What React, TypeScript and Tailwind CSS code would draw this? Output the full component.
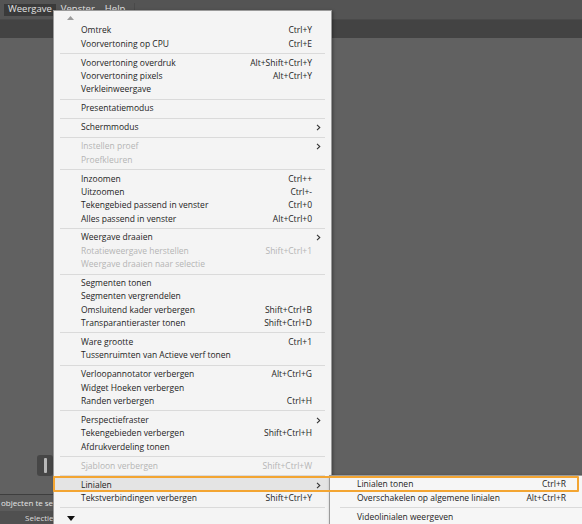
import React from "react";

type Item =
  | { type: "sep" }
  | { type: "item"; label: string; shortcut?: string; sub?: boolean; disabled?: boolean; active?: boolean };

const items: Item[] = [
  { type: "item", label: "Omtrek", shortcut: "Ctrl+Y" },
  { type: "item", label: "Voorvertoning op CPU", shortcut: "Ctrl+E" },
  { type: "sep" },
  { type: "item", label: "Voorvertoning overdruk", shortcut: "Alt+Shift+Ctrl+Y" },
  { type: "item", label: "Voorvertoning pixels", shortcut: "Alt+Ctrl+Y" },
  { type: "item", label: "Verkleinweergave" },
  { type: "sep" },
  { type: "item", label: "Presentatiemodus" },
  { type: "sep" },
  { type: "item", label: "Schermmodus", sub: true },
  { type: "sep" },
  { type: "item", label: "Instellen proef", sub: true, disabled: true },
  { type: "item", label: "Proefkleuren", disabled: true },
  { type: "sep" },
  { type: "item", label: "Inzoomen", shortcut: "Ctrl++" },
  { type: "item", label: "Uitzoomen", shortcut: "Ctrl+-" },
  { type: "item", label: "Tekengebied passend in venster", shortcut: "Ctrl+0" },
  { type: "item", label: "Alles passend in venster", shortcut: "Alt+Ctrl+0" },
  { type: "sep" },
  { type: "item", label: "Weergave draaien", sub: true },
  { type: "item", label: "Rotatieweergave herstellen", shortcut: "Shift+Ctrl+1", disabled: true },
  { type: "item", label: "Weergave draaien naar selectie", disabled: true },
  { type: "sep" },
  { type: "item", label: "Segmenten tonen" },
  { type: "item", label: "Segmenten vergrendelen" },
  { type: "item", label: "Omsluitend kader verbergen", shortcut: "Shift+Ctrl+B" },
  { type: "item", label: "Transparantieraster tonen", shortcut: "Shift+Ctrl+D" },
  { type: "sep" },
  { type: "item", label: "Ware grootte", shortcut: "Ctrl+1" },
  { type: "item", label: "Tussenruimten van Actieve verf tonen" },
  { type: "sep" },
  { type: "item", label: "Verloopannotator verbergen", shortcut: "Alt+Ctrl+G" },
  { type: "item", label: "Widget Hoeken verbergen" },
  { type: "item", label: "Randen verbergen", shortcut: "Ctrl+H" },
  { type: "sep" },
  { type: "item", label: "Perspectiefraster", sub: true },
  { type: "item", label: "Tekengebieden verbergen", shortcut: "Shift+Ctrl+H" },
  { type: "item", label: "Afdrukverdeling tonen" },
  { type: "sep" },
  { type: "item", label: "Sjabloon verbergen", shortcut: "Shift+Ctrl+W", disabled: true },
  { type: "sep" },
  { type: "item", label: "Linialen", sub: true, active: true },
  { type: "item", label: "Tekstverbindingen verbergen", shortcut: "Shift+Ctrl+Y" },
  { type: "sep" },
];

const subItems: Item[] = [
  { type: "item", label: "Linialen tonen", shortcut: "Ctrl+R" },
  { type: "item", label: "Overschakelen op algemene linialen", shortcut: "Alt+Ctrl+R" },
  { type: "sep" },
  { type: "item", label: "Videolinialen weergeven" },
];

function Chevron() {
  return (
    <svg width="5" height="7" viewBox="0 0 5 7" className="block">
      <path d="M1 0.8 L3.8 3.5 L1 6.2" fill="none" stroke="#333" strokeWidth="1.1" />
    </svg>
  );
}

function Rows({ list, sep }: { list: Item[]; sep: string }) {
  return (
    <>
      {list.map((it, i) =>
        it.type === "sep" ? (
          <div key={i} className="h-[5.67px] flex items-center">
            <div className={`h-px w-full bg-[#dadada] ${sep}`} />
          </div>
        ) : (
          <div
            key={i}
            className={`h-[13.33px] flex items-center pl-[27px] ${it.active ? "bg-[#e4e4e4]" : ""} ${
              it.disabled ? "text-[#b4b4b4]" : "text-[#1e1e1e]"
            }`}
          >
            <span className="flex-1 whitespace-nowrap">{it.label}</span>
            {it.shortcut && <span className="whitespace-nowrap">{it.shortcut}</span>}
            <span className="w-[19px] flex items-center pl-[4px]">{it.sub && <Chevron />}</span>
          </div>
        )
      )}
    </>
  );
}

export default function App() {
  return (
    <div
      className="relative w-[582px] h-[524px] overflow-hidden bg-[#616161] flex flex-col"
      style={{ fontFamily: '"Open Sans", "Noto Sans", sans-serif' }}
    >
      {/* menubar */}
      <div className="h-[19px] bg-[#545454] flex items-center text-[9.5px] text-[#e2e2e2]">
        <div className="ml-[4px] h-[12px] px-[4px] bg-[#3a3a3a] flex items-center">Weergave</div>
        <div className="ml-[5px]">Venster</div>
        <div className="ml-[10px]">Help</div>
        <div className="ml-[9px] w-px h-[14px] bg-[#4a4a4a]" />
      </div>
      <div className="h-[19px] bg-[#434343] border-t border-[#4a4a4a]" />
      <div className="flex-1 bg-[#616161] relative">
        <div className="absolute left-[37px] top-[417px] w-[16px] h-[21px] rounded-[3px] bg-[#464646] flex items-center justify-center">
          <div className="w-[3px] h-[15px] bg-[#b8b8b8] rounded-[1px]" />
        </div>
      </div>
      <div className="h-[17px] bg-[#5b5b5b] border-t border-[#3e3e3e] text-[8px] text-[#e6e6e6] flex items-center pl-[1px]">
        objecten te selecteren
      </div>
      <div className="h-[13px] bg-[#505050] text-[8px] text-[#dcdcdc] flex items-center pl-[25px]">Selectie</div>

      {/* main menu */}
      <div className="absolute left-[53px] top-[10px] w-[279px] h-[530px] bg-[#f4f4f4] border border-[#9a9a9a] text-[8.5px] shadow-[1px_1px_3px_rgba(0,0,0,0.35)]">
        <div className="h-[13px] flex items-center pl-[13px]">
          <svg width="7" height="4" viewBox="0 0 7 4">
            <path d="M0 4 L3.5 0 L7 4 Z" fill="#9c9c9c" />
          </svg>
        </div>
        <Rows list={items} sep="ml-[6px] mr-[6px]" />
        <div className="h-[16px] flex items-center pl-[13px]">
          <svg width="8" height="5" viewBox="0 0 8 5">
            <path d="M0 0 L8 0 L4 5 Z" fill="#111" />
          </svg>
        </div>
      </div>

      {/* submenu */}
      <div className="absolute left-[329px] top-[475px] w-[262px] h-[60px] bg-[#f6f6f6] border border-[#9a9a9a] text-[8.5px] shadow-[1px_1px_3px_rgba(0,0,0,0.35)]">
        <div className="h-[2px]" />
        <div className="w-[255px]">
          <Rows list={subItems} sep="ml-[10px] mr-[0px]" />
        </div>
      </div>

      {/* annotation highlight */}
      <div className="absolute left-[53px] top-[476px] w-[526px] h-[16px] border-2 border-[#f3a532] rounded-[1px]" />
    </div>
  );
}
